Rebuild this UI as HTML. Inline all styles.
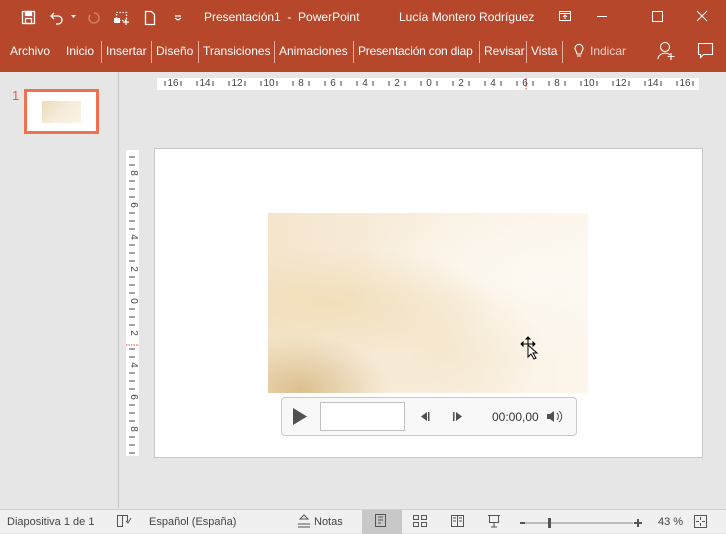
<!DOCTYPE html>
<html><head><meta charset="utf-8"><style>
*{margin:0;padding:0;box-sizing:border-box}
body{width:726px;height:533px;overflow:hidden;background:#e6e6e6;font-family:"Liberation Sans",sans-serif;position:relative}
.abs{position:absolute}
#title{left:0;top:0;width:726px;height:33px;background:#b7472a}
#rib{left:0;top:33px;width:726px;height:39px;background:#b7472a}
.w{color:#fff;font-size:12px;position:absolute;white-space:nowrap}
.tab{color:#fff;font-size:12px;position:absolute;top:44px;white-space:nowrap}
.sep{position:absolute;top:41px;width:1px;height:22px;background:#e8b0a0}
#hr{left:157px;top:78px;width:542px;height:12px;background:#fff}
#vr{left:126px;top:150px;width:13px;height:306px;background:#fff}
.hl{position:absolute;top:0px;font-size:10px;line-height:12px;color:#444;width:20px;text-align:center;margin-left:-10px}
.vl{position:absolute;left:1px;font-size:10px;color:#444;transform:rotate(90deg);width:12px;text-align:center;height:12px;line-height:12px;margin-top:-6px}
#status{left:0;top:509px;width:726px;height:24px;background:#f0f0f0;border-top:1px solid #d0d0d0}
.st{position:absolute;top:6px;font-size:11px;color:#444;white-space:nowrap}
</style></head><body>
<div id="title" class="abs"></div>
<div id="rib" class="abs"></div>
<svg class="abs" style="left:0;top:0" width="200" height="33" fill="none" stroke="#fff" stroke-width="1.3">
<rect x="22.5" y="11.5" width="12" height="12"/><rect x="25.5" y="11.5" width="6" height="4" fill="#fff"/><rect x="25.5" y="18.5" width="6" height="5"/>
<path d="M54 13 l-3 3 3 3 M51 16 h7 a4 4 0 0 1 0 8 h-2"/>
<path d="M71 15 h5 l-2.5 3z" fill="#fff" stroke="none"/>
<path d="M94 13 a5 5 0 1 1 -4 2" stroke="#d88870"/>
<rect x="116.5" y="12.5" width="10" height="8" stroke-dasharray="1.5 1.5"/><rect x="114" y="18" width="6" height="5" fill="#fff" stroke="none"/><path d="M123 22 h6 M126 19 v6"/>
<path d="M145.5 11.5 h6 l3 3 v10 h-9z"/>
<path d="M175 16 h6 M175 18 l3 2 3-2" />
</svg>
<div class="w" style="left:204px;top:10px">Presentación1 &nbsp;-&nbsp; PowerPoint</div>
<div class="w" style="left:399px;top:10px">Lucía Montero Rodríguez</div>
<svg class="abs" style="left:555px;top:0" width="171" height="33" fill="none" stroke="#fff" stroke-width="1">
<rect x="4.5" y="11.5" width="11" height="9"/><path d="M4.5 13.5 h11 M10 19 v-4 M8 17 l2-2 2 2"/>
<path d="M42 16.5 h10"/><rect x="97.5" y="11.5" width="10" height="10"/><path d="M142 11 l10 10 M152 11 l-10 10"/>
</svg>
<div class="tab" style="left:10px">Archivo</div>
<div class="tab" style="left:66px">Inicio</div><div class="sep" style="left:101px"></div>
<div class="tab" style="left:106px">Insertar</div><div class="sep" style="left:151px"></div>
<div class="tab" style="left:156px">Diseño</div><div class="sep" style="left:198px"></div>
<div class="tab" style="left:203px">Transiciones</div><div class="sep" style="left:274px"></div>
<div class="tab" style="left:279px">Animaciones</div><div class="sep" style="left:353px"></div>
<div class="tab" style="left:358px;letter-spacing:-0.2px">Presentación con diap</div><div class="sep" style="left:479px"></div>
<div class="tab" style="left:484px">Revisar</div><div class="sep" style="left:526px"></div>
<div class="tab" style="left:531px">Vista</div><div class="sep" style="left:562px"></div>
<div class="tab" style="left:590px;color:#f0d0c4">Indicar</div>
<svg class="abs" style="left:570px;top:33px" width="156" height="39" fill="none" stroke="#fff" stroke-width="1.1">
<path d="M6 18 a4 4 0 1 1 6 0 l-1 3 h-4z M7 23 h4"/>
<circle cx="95" cy="14" r="4.5"/><path d="M88 26 a7 6 0 0 1 12-4 M101 20 v7 M97.5 23.5 h7"/>
<path d="M128.5 10.5 h14 v11 h-9 l-3 3 v-3 h-2z"/>
</svg>
<div class="abs" style="left:118px;top:72px;width:1px;height:436px;background:#c6c6c6"></div>
<div class="abs" style="left:12px;top:88px;color:#e0603c;font-size:13px">1</div>
<div class="abs" style="left:24px;top:89px;width:75px;height:45px;border:3px solid #f07050;background:#fff"></div>
<div class="abs" style="left:42px;top:101px;width:39px;height:22px;background:linear-gradient(135deg,#ecdcb8,#f6ecdc 50%,#fbf3e6);"></div>
<div id="hr" class="abs">
<svg class="abs" style="left:0;top:0" width="542" height="12" stroke="#444">
<path d="M8 3v5M24 3v5M40 3v5M56 3v5M72 3v5M88 3v5M104 3v5M120 3v5M136 3v5M152 3v5M168 3v5M184 3v5M200 3v5M216 3v5M232 3v5M248 3v5M264 3v5M280 3v5M296 3v5M312 3v5M328 3v5M344 3v5M360 3v5M376 3v5M392 3v5M408 3v5M424 3v5M440 3v5M456 3v5M472 3v5M488 3v5M504 3v5M520 3v5M536 3v5"/>
<path d="M369 0v12" stroke="#e05030" stroke-dasharray="1.5 1"/>
</svg>
<span class="hl" style="left:16px">16</span><span class="hl" style="left:48px">14</span><span class="hl" style="left:80px">12</span><span class="hl" style="left:112px">10</span><span class="hl" style="left:144px">8</span><span class="hl" style="left:176px">6</span><span class="hl" style="left:208px">4</span><span class="hl" style="left:240px">2</span><span class="hl" style="left:272px">0</span><span class="hl" style="left:304px">2</span><span class="hl" style="left:336px">4</span><span class="hl" style="left:368px">6</span><span class="hl" style="left:400px">8</span><span class="hl" style="left:432px">10</span><span class="hl" style="left:464px">12</span><span class="hl" style="left:496px">14</span><span class="hl" style="left:528px">16</span>
</div>
<div id="vr" class="abs">
<svg class="abs" style="left:0;top:0" width="13" height="306" stroke="#444">
<path d="M3 7h6M3 31h6M3 39h6M3 63h6M3 71h6M3 95h6M3 103h6M3 127h6M3 135h6M3 159h6M3 167h6M3 199h6M3 223h6M3 231h6M3 255h6M3 263h6M3 287h6M3 295h6M3 15h6M3 47h6M3 79h6M3 111h6M3 143h6M3 175h6M3 207h6M3 239h6M3 271h6M3 303h6"/>
<path d="M0 195h13" stroke="#e05030" stroke-dasharray="1.5 1"/>
</svg>
<span class="vl" style="top:23px">8</span><span class="vl" style="top:55px">6</span><span class="vl" style="top:87px">4</span><span class="vl" style="top:119px">2</span><span class="vl" style="top:151px">0</span><span class="vl" style="top:183px">2</span><span class="vl" style="top:215px">4</span><span class="vl" style="top:247px">6</span><span class="vl" style="top:279px">8</span>
</div>
<div class="abs" style="left:154px;top:148px;width:549px;height:310px;background:#fff;border:1px solid #c8c8c8"></div>
<div class="abs" style="left:268px;top:213px;width:320px;height:180px;background:
radial-gradient(ellipse at 10% 98%,rgba(200,160,90,.55),transparent 22%),
radial-gradient(ellipse at 20% 50%,rgba(240,220,180,.8),transparent 45%),
radial-gradient(ellipse at 55% 75%,rgba(243,228,198,.7),transparent 40%),
radial-gradient(ellipse at 85% 35%,rgba(253,249,242,1),transparent 50%),
linear-gradient(90deg,#f4e5cc,#f9efe0 50%,#fcf6ec)"></div>
<svg class="abs" style="left:518px;top:336px" width="22" height="28">
<path d="M10 1v14M3 8h14M10 1l-2 2h4zM3 8l2-2v4zM17 8l-2-2v4z" stroke="#000" fill="#000"/>
<path d="M10 9v12l3-3 3 5 2-1-3-5h4z" fill="#fff" stroke="#000"/>
</svg>
<div class="abs" style="left:281px;top:397px;width:296px;height:39px;background:#f8f8f8;border:1px solid #c8c8c8;border-radius:4px"></div>
<svg class="abs" style="left:281px;top:397px" width="296" height="39">
<path d="M12 11v17l14-8.5z" fill="#505050"/>
<rect x="39.5" y="5.5" width="84" height="28" fill="#fff" stroke="#c0c0c0"/>
<path d="M146 15v9l-6-4.5z M147 15h1.5v9H147z" fill="#505050"/>
<path d="M172 15h1.5v9H172z M175 15v9l6-4.5z" fill="#505050"/>
<path d="M266 17h3l4-3v11l-4-3h-3z" fill="#505050"/>
<path d="M276 16a5 5 0 0 1 0 7M278 14a7 7 0 0 1 0 11" stroke="#505050" fill="none"/>
</svg>
<div class="abs" style="left:492px;top:410px;font-size:12px;color:#333">00:00,00</div>
<div id="status" class="abs">
<span class="st" style="left:7px">Diapositiva 1 de 1</span>
<span class="st" style="left:149px">Español (España)</span>
<span class="st" style="left:314px">Notas</span>
<div class="abs" style="left:362px;top:0;width:40px;height:24px;background:#c8c8c8"></div>
<span class="st" style="left:658px">43 %</span>
</div>
<svg class="abs" style="left:0;top:509px" width="726" height="24" fill="none" stroke="#555" stroke-width="1">
<path d="M117.5 6.5h5v11h-5zM122.5 6.5h5v6M126 12l2 2 3-5"/>
<path d="M298 15h12M298 18h12M304 6l-4 4h8z"/>
<rect x="375.5" y="5.5" width="10" height="12"/><path d="M378 8h5M378 11h5M378 14h3"/>
<rect x="413.5" y="6.5" width="5" height="4"/><rect x="421.5" y="6.5" width="5" height="4"/><rect x="413.5" y="13.5" width="5" height="4"/><rect x="421.5" y="13.5" width="5" height="4"/>
<path d="M451.5 6.5h12v11h-12zM457.5 6.5v11M453 9h3M453 12h3M459 9h3M459 12h3"/>
<path d="M488 6.5h12M489.5 6.5v7h9v-7M494 13.5v4M491 18h6"/>
<path d="M520 14h5" stroke-width="2"/><path d="M525 14h108" stroke="#888"/><rect x="548" y="9" width="3" height="10" fill="#555" stroke="none"/>
<path d="M638 10v8M634 14h8" stroke-width="2"/>
<rect x="694.5" y="6.5" width="12" height="12"/><path d="M700.5 8v3M700.5 14v3M696 12.5h3M702 12.5h3"/>
</svg>
</body></html>
